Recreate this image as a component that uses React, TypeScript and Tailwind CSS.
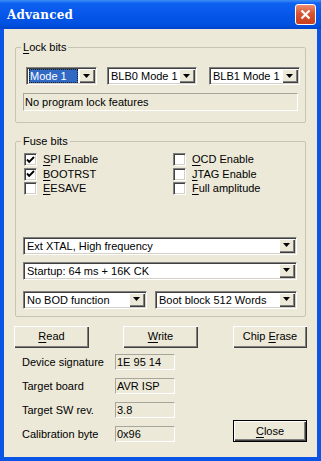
import React from 'react';

const sunken =
  'border border-t-[#808080] border-l-[#808080] border-b-white border-r-white shadow-[inset_1px_1px_0_#404040,inset_-1px_-1px_0_#d4d0c8]';
const raised =
  'bg-[#ECE9D8] shadow-[inset_1px_1px_0_#ffffff,inset_-1px_-1px_0_#404040,inset_-2px_-2px_0_#808080]';

function Acc({ k, rest }: { k: string; rest: string }) {
  return (
    <>
      <span className="underline underline-offset-[2px]">{k}</span>
      {rest}
    </>
  );
}

function Combo({
  value,
  className,
  selected = false,
}: {
  value: string;
  className: string;
  selected?: boolean;
}) {
  return (
    <div className={`flex h-[18px] bg-white p-[1px] ${sunken} ${className}`}>
      <div className="flex flex-1 items-center pl-[1px] pr-[1px] min-w-0 overflow-hidden">
        <span
          className={
            selected
              ? 'w-full bg-[#316AC5] text-white leading-[14px] pl-[1px] outline-1 outline-dotted outline-offset-[-1px] outline-[#1a1a1a]'
              : 'leading-[14px] pl-[1px] whitespace-nowrap'
          }
        >
          {value}
        </span>
      </div>
      <div className={`flex shrink-0 w-[16px] h-full items-center justify-center ${raised}`}>
        <svg width="7" height="4" viewBox="0 0 7 4" className="-mt-[1px] -ml-[1px]">
          <path d="M0 0h7L3.5 4z" fill="#000" />
        </svg>
      </div>
    </div>
  );
}

function Check({ checked, label }: { checked: boolean; label: React.ReactNode }) {
  return (
    <div className="flex items-start h-[14.5px]">
      <div className={`w-[13px] h-[13px] bg-white flex items-center justify-center ${sunken}`}>
        {checked && (
          <svg width="9" height="8" viewBox="0 0 9 8">
            <path d="M1 3.5L3.2 5.8L8 1" stroke="#000" strokeWidth="1.9" fill="none" />
          </svg>
        )}
      </div>
      <span className="ml-[6px] leading-[13px]">{label}</span>
    </div>
  );
}

function Btn({
  children,
  className,
  def = false,
}: {
  children: React.ReactNode;
  className: string;
  def?: boolean;
}) {
  return (
    <div
      className={`flex h-[22px] items-center justify-center ${raised} ${
        def ? 'border border-black' : ''
      } ${className}`}
    >
      <span>{children}</span>
    </div>
  );
}

function Field({ value, className }: { value: string; className: string }) {
  return (
    <div
      className={`h-[16px] border border-t-[#a8a69c] border-l-[#a8a69c] border-b-white border-r-white leading-[14px] pl-[1px] ${className}`}
    >
      {value}
    </div>
  );
}

function Info({ label, value }: { label: string; value: string }) {
  return (
    <div className="flex items-center h-[16px]">
      <span className="w-[93px] leading-[16px]">{label}</span>
      <Field value={value} className="w-[60px]" />
    </div>
  );
}

export default function App() {
  return (
    <div className="w-[321px] h-[461px] flex flex-col bg-[#0A55E6] font-['Liberation_Sans',Arial,sans-serif] text-[11px] text-black">
      {/* title bar */}
      <div className="flex h-[29px] items-center bg-[linear-gradient(to_bottom,#3D8EF8_0%,#0D61F0_12%,#0656EA_50%,#0050E0_85%,#0044CC_100%)]">
        <span className="pl-[7px] text-white font-bold text-[12px] font-['DejaVu_Serif',serif] tracking-[0.2px]">
          Advanced
        </span>
        <div className="ml-auto mr-[5px] w-[21px] h-[21px] rounded-[3px] border border-white bg-[linear-gradient(to_bottom,#EC8E70,#D9532F_45%,#C8401F)] flex items-center justify-center">
          <svg width="11" height="11" viewBox="0 0 11 11">
            <path d="M1.5 1.5L9.5 9.5M9.5 1.5L1.5 9.5" stroke="#fff" strokeWidth="2.2" />
          </svg>
        </div>
      </div>

      {/* body */}
      <div className="flex flex-col flex-1 ml-[4px] mr-[4px] mb-[4px] bg-[#ECE9D8]">
        {/* lock bits */}
        <fieldset className="mt-[12px] mx-[11px] border border-[#C7C4B4] rounded-[2px] pb-[11px]">
          <legend className="ml-[5px] px-[2px] leading-[13px]">
            <Acc k="L" rest="ock bits" />
          </legend>
          <div className="flex mt-[13px] pl-[10px]">
            <Combo value="Mode 1" className="w-[71px]" selected />
            <Combo value="BLB0 Mode 1" className="w-[90px] ml-[10px]" />
            <Combo value="BLB1 Mode 1" className="w-[91px] ml-[12px]" />
          </div>
          <Field value="No program lock features" className="mt-[8px] ml-[7px] w-[275px] h-[18px] leading-[16px]" />
        </fieldset>

        {/* fuse bits */}
        <fieldset className="mt-[12px] mx-[11px] border border-[#C7C4B4] rounded-[2px] pb-[7px]">
          <legend className="ml-[5px] px-[2px] leading-[13px]">Fuse bits</legend>
          <div className="flex mt-[5px] pl-[8px]">
            <div className="flex flex-col w-[149px]">
              <Check checked label={<Acc k="S" rest="PI Enable" />} />
              <Check checked label={<Acc k="B" rest="OOTRST" />} />
              <Check checked={false} label={<Acc k="E" rest="ESAVE" />} />
            </div>
            <div className="flex flex-col">
              <Check checked={false} label={<Acc k="O" rest="CD Enable" />} />
              <Check checked={false} label={<Acc k="J" rest="TAG Enable" />} />
              <Check checked={false} label={<Acc k="F" rest="ull amplitude" />} />
            </div>
          </div>
          <Combo value="Ext XTAL, High frequency" className="mt-[40px] ml-[7px] w-[274px]" />
          <Combo value="Startup: 64 ms + 16K CK" className="mt-[7px] ml-[7px] w-[274px]" />
          <div className="flex mt-[11px] ml-[7px]">
            <Combo value="No BOD function" className="w-[124px]" />
            <Combo value="Boot block 512 Words" className="w-[142px] ml-[8px]" />
          </div>
        </fieldset>

        {/* buttons */}
        <div className="flex mt-[9px] ml-[10px]">
          <Btn className="w-[75px]">
            <Acc k="R" rest="ead" />
          </Btn>
          <Btn className="w-[75px] ml-[34px]">
            <Acc k="W" rest="rite" />
          </Btn>
          <Btn className="w-[74px] ml-[35px]">
            Chip <Acc k="E" rest="rase" />
          </Btn>
        </div>

        {/* info */}
        <div className="flex mt-[6px] ml-[18px]">
          <div className="flex flex-col gap-[8.3px]">
            <Info label="Device signature" value="1E 95 14" />
            <Info label="Target board" value="AVR ISP" />
            <Info label="Target SW rev." value="3.8" />
            <Info label="Calibration byte" value="0x96" />
          </div>
          <Btn def className="w-[74px] self-end ml-[58px]">
            <Acc k="C" rest="lose" />
          </Btn>
        </div>
      </div>
    </div>
  );
}
